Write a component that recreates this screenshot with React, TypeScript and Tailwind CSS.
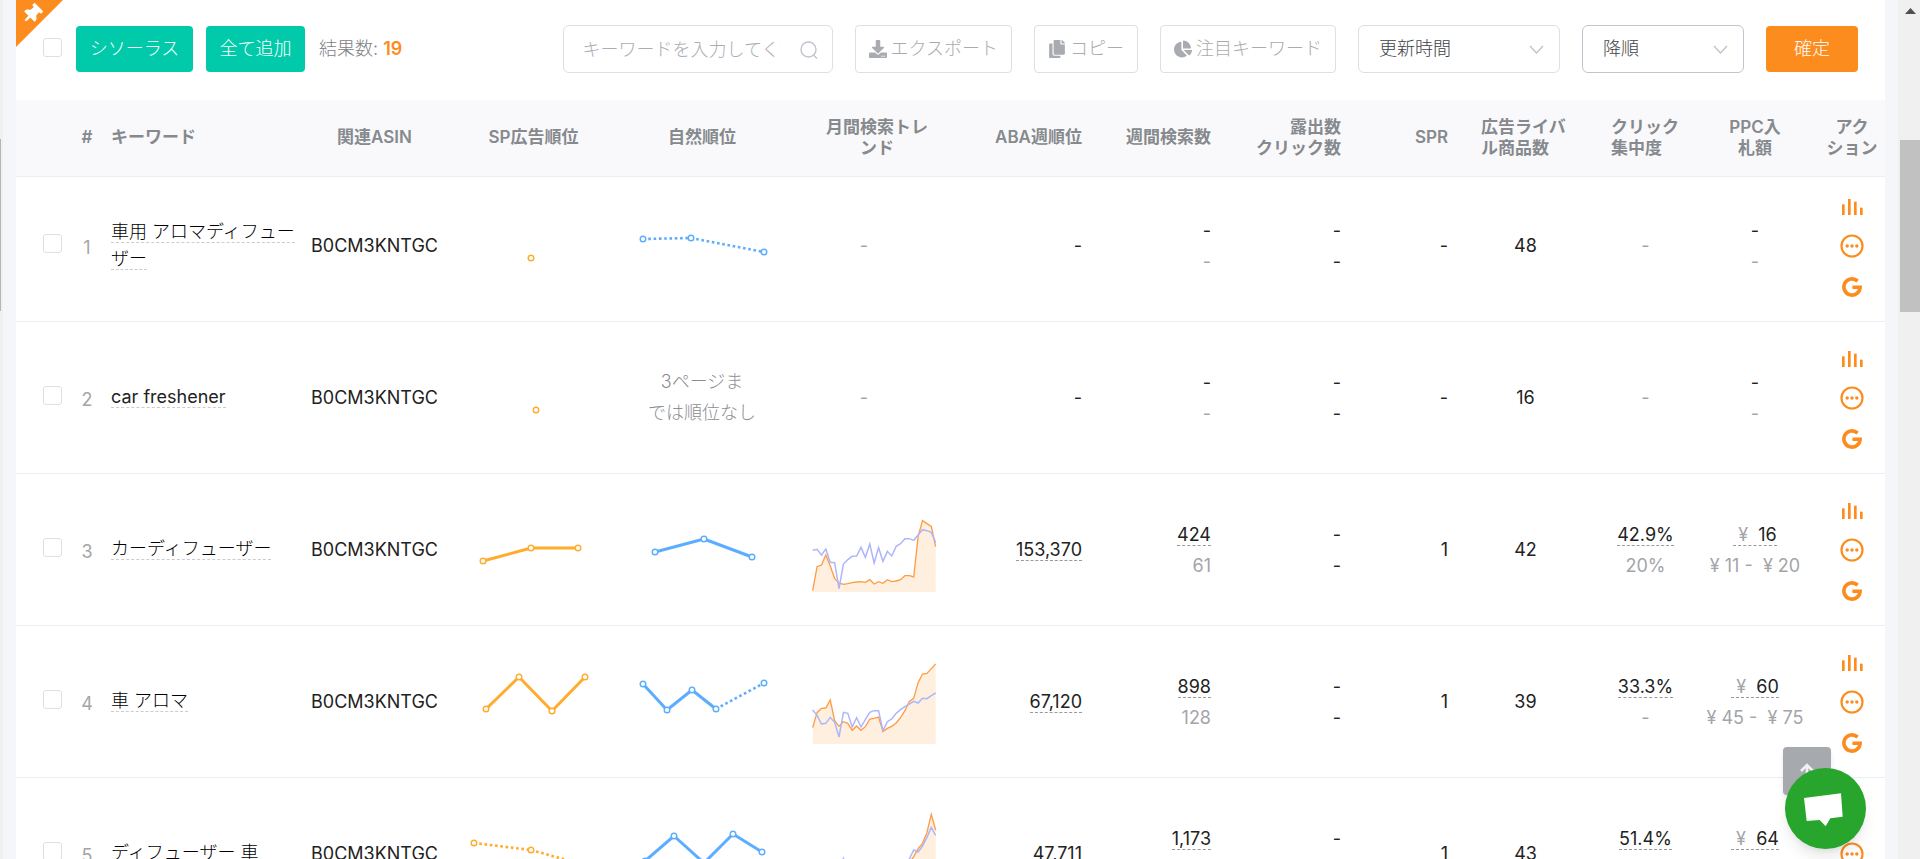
import React from "react";
import { FaChartPie, FaCopy, FaDownload, FaThumbtack } from "react-icons/fa";

type Point = [number, number];

interface RankLine {
  color: string;
  points: Point[];
  // index of the first dotted segment
  dottedFrom?: number;
}

interface Trend {
  searches: number[];
  rank: number[];
}

interface Row {
  id: number;
  keyword: string;
  asin: string;
  sp: RankLine;
  natural?: RankLine;
  trend?: Trend;
  aba?: string;
  weekly?: [string, string];
  exposure: [string, string];
  spr: string;
  rivals: string;
  click?: [string, string];
  ppc?: [string, string];
}

const AMBER = "#ffac2d";
const BLUE = "#5cadff";

const rows: Row[] = [
  {
    id: 1,
    keyword: "車用 アロマディフューザー",
    asin: "B0CM3KNTGC",
    sp: { color: AMBER, points: [[72, 62]] },
    natural: { color: BLUE, points: [[16, 43], [64, 42], [137, 56]], dottedFrom: 0 },
    exposure: ["-", "-"],
    spr: "-",
    rivals: "48",
  },
  {
    id: 2,
    keyword: "car freshener",
    asin: "B0CM3KNTGC",
    sp: { color: AMBER, points: [[77, 62]] },
    exposure: ["-", "-"],
    spr: "-",
    rivals: "16",
  },
  {
    id: 3,
    keyword: "カーディフューザー",
    asin: "B0CM3KNTGC",
    sp: { color: AMBER, points: [[24, 61], [72, 48], [119, 48]] },
    natural: { color: BLUE, points: [[28, 52], [77, 39], [125, 57]] },
    trend: {
      searches: [
        272, 200, 195, 165, 198, 235, 249, 253, 251, 248, 246, 245, 247, 239, 252,
        245, 250, 239, 245, 243, 239, 227, 227, 231, 110, 62, 71, 79, 140,
      ],
      rank: [
        151, 148, 165, 147, 187, 188, 266, 192, 179, 169, 168, 142, 172, 132, 189,
        143, 184, 154, 168, 139, 131, 116, 116, 121, 105, 89, 92, 97, 127,
      ],
    },
    aba: "153,370",
    weekly: ["424", "61"],
    exposure: ["-", "-"],
    spr: "1",
    rivals: "42",
    click: ["42.9%", "20%"],
    ppc: ["16", "¥ 11 -  ¥ 20"],
  },
  {
    id: 4,
    keyword: "車 アロマ",
    asin: "B0CM3KNTGC",
    sp: { color: AMBER, points: [[27, 57], [60, 25], [93, 59], [126, 25]] },
    natural: {
      color: BLUE,
      points: [[16, 32], [40, 58], [65, 38], [89, 57], [137, 31]],
      dottedFrom: 3,
    },
    trend: {
      searches: [
        227, 182, 169, 168, 144, 206, 223, 209, 214, 235, 222, 235, 224, 201, 199,
        195, 238, 229, 223, 213, 197, 176, 148, 139, 92, 66, 64, 50, 36,
      ],
      rank: [
        174, 190, 216, 214, 196, 211, 255, 181, 184, 225, 197, 225, 202, 181, 176,
        176, 236, 209, 201, 184, 173, 164, 156, 148, 153, 139, 140, 131, 123,
      ],
    },
    aba: "67,120",
    weekly: ["898", "128"],
    exposure: ["-", "-"],
    spr: "1",
    rivals: "39",
    click: ["33.3%", "-"],
    ppc: ["60", "¥ 45 -  ¥ 75"],
  },
  {
    id: 5,
    keyword: "ディフューザー 車",
    asin: "B0CM3KNTGC",
    sp: { color: AMBER, points: [[15, 39], [72, 46], [129, 62]], dottedFrom: 0 },
    natural: { color: BLUE, points: [[18, 57], [47, 32], [77, 59], [106, 30], [135, 48]] },
    trend: {
      searches: [
        230, 215, 210, 205, 200, 215, 220, 212, 215, 220, 222, 220, 215, 210, 212,
        215, 220, 215, 210, 205, 200, 190, 175, 158, 134, 118, 86, 31, 78,
      ],
      rank: [
        200, 210, 205, 200, 195, 200, 210, 163, 190, 200, 205, 200, 195, 190, 195,
        200, 205, 200, 195, 190, 185, 180, 165, 138, 144, 126, 100, 70, 94,
      ],
    },
    aba: "47,711",
    weekly: ["1,173", "\u00a0"],
    exposure: ["-", "-"],
    spr: "1",
    rivals: "43",
    click: ["51.4%", "\u00a0"],
    ppc: ["64", "\u00a0"],
  },
];

// Japanese keywords are set in the light weight, plain ASCII ones are not
const isAscii = (text: string) => /^[\x20-\x7e]+$/.test(text);

function RankChart({ line }: { line: RankLine }) {
  const { color, points, dottedFrom = points.length } = line;
  return (
    <svg width="150" height="100" viewBox="0 0 150 100" className="mx-auto block">
      {points.slice(1).map(([x, y], i) => (
        <line
          key={i}
          x1={points[i][0]}
          y1={points[i][1]}
          x2={x}
          y2={y}
          stroke={color}
          strokeWidth={i >= dottedFrom ? 2.6 : 3}
          strokeDasharray={i >= dottedFrom ? "2.6 2.7" : undefined}
        />
      ))}
      {points.map(([x, y], i) => (
        <circle key={i} cx={x} cy={y} r="2.8" fill="#fff" stroke={color} strokeWidth="1.4" />
      ))}
    </svg>
  );
}

function TrendChart({ trend }: { trend: Trend }) {
  const toPoints = (values: number[]) =>
    values.map((y, i) => `${(2 + i * 13.18).toFixed(1)},${y}`).join(" ");
  const searches = toPoints(trend.searches);
  return (
    <svg width="124" height="100" viewBox="0 0 372 300" className="ml-6 block">
      <polygon points={`2,276 ${searches} 371,276`} fill="#ff8c1f" fillOpacity="0.14" />
      <polyline points={searches} fill="none" stroke="#ff9b45" strokeWidth="4" />
      <polyline points={toPoints(trend.rank)} fill="none" stroke="#adb6fa" strokeWidth="4.5" />
    </svg>
  );
}

function BarsIcon() {
  return (
    <svg width="21" height="16" viewBox="0 0 63 48" fill="currentColor">
      <rect x="0" y="16" width="8" height="32" />
      <rect x="18" y="0" width="8" height="48" />
      <rect x="36" y="8" width="8" height="40" />
      <rect x="54" y="26" width="8" height="22" />
    </svg>
  );
}

function MoreIcon() {
  return (
    <svg width="24" height="24" viewBox="0 0 24 24" fill="currentColor">
      <circle cx="12" cy="12" r="10.5" fill="none" stroke="currentColor" strokeWidth="2.2" />
      <circle cx="7.2" cy="12" r="1.7" />
      <circle cx="12" cy="12" r="1.7" />
      <circle cx="16.8" cy="12" r="1.7" />
    </svg>
  );
}

function GoogleIcon() {
  return (
    <svg width="20" height="20" viewBox="0 0 20 20" fill="none" stroke="currentColor" strokeWidth="3.6">
      <path d="M15.6 4.1A8.1 8.1 0 1 0 18.1 10.2H10.4" />
    </svg>
  );
}

function Chevron() {
  return (
    <svg
      width="15"
      height="9"
      viewBox="0 0 15 9"
      className="pointer-events-none absolute right-4 top-5"
      fill="none"
      stroke="#c0c4cc"
      strokeWidth="1.4"
    >
      <path d="M1 1l6.5 7L14 1" />
    </svg>
  );
}

function Checkbox({ label }: { label: string }) {
  return (
    <input
      type="checkbox"
      aria-label={label}
      className="block size-[19px] shrink-0 appearance-none rounded-[3px] border border-[#dcdfe6] bg-white"
    />
  );
}

function ToolButton({ icon, children }: { icon: React.ReactNode; children: React.ReactNode }) {
  return (
    <button className="flex h-12 shrink-0 items-center gap-1 rounded border border-[#dcdfe6] px-[13px] text-[#a8abb0]">
      {icon}
      <span>{children}</span>
    </button>
  );
}

function Stacked({ values, muted = true }: { values: [string, string]; muted?: boolean }) {
  const dashed = /\d/.test(values[0]);
  return (
    <div className="leading-[31px]">
      <div>
        <span className={dashed ? "border-b border-dashed border-[#999]" : ""}>{values[0]}</span>
      </div>
      <div className={muted ? "text-[#a3a5a9]" : ""}>{values[1]}</div>
    </div>
  );
}

function KeywordRow({ row }: { row: Row }) {
  return (
    <tr className="h-[152px] border-b border-[#ebeef5] first:h-[145px] [&>td]:pt-px first:[&>td]:pb-[7px]">
      <td className="pl-[27px]">
        <div className="pb-1">
          <Checkbox label={row.keyword} />
        </div>
      </td>
      <td className="text-center text-[#a3a5a9]">
        <div className="pt-1">{row.id}</div>
      </td>
      <td className="pl-[13px] leading-[27px]">
        <div className="pb-0.5">
          <a
            href="#"
            className={`border-b border-dashed border-[#ccc] ${
              isAscii(row.keyword) ? "font-normal" : "font-light text-black"
            }`}
          >
            {row.keyword}
          </a>
        </div>
      </td>
      <td className="text-center">{row.asin}</td>
      <td>
        <RankChart line={row.sp} />
      </td>
      <td className="text-center">
        {row.natural ? (
          <RankChart line={row.natural} />
        ) : (
          <div className="pb-0.5 font-light leading-[31px] text-[#8c8e92]">
            3ページま
            <br />
            では順位なし
          </div>
        )}
      </td>
      <td>
        {row.trend ? (
          <TrendChart trend={row.trend} />
        ) : (
          <div className="pr-[26px] text-center text-[#a3a5a9]">-</div>
        )}
      </td>
      <td className="pr-[13px] text-right">
        {row.aba ? <span className="border-b border-dashed border-[#999]">{row.aba}</span> : "-"}
      </td>
      <td className="pr-[13px] text-right">
        <Stacked values={row.weekly ?? ["-", "-"]} />
      </td>
      <td className="pr-[13px] text-right">
        <Stacked values={row.exposure} muted={false} />
      </td>
      <td className="pr-[13px] text-right">{row.spr}</td>
      <td className="text-center">{row.rivals}</td>
      <td className="text-center">
        {row.click ? <Stacked values={row.click} /> : <span className="text-[#a3a5a9]">-</span>}
      </td>
      <td className="whitespace-pre text-center">
        {row.ppc ? (
          <div className="leading-[31px]">
            <div>
              <span className="border-b border-dashed border-[#999]">
                <span className="text-[#a3a5a9]"> ¥ </span> {row.ppc[0]}
              </span>
            </div>
            <div className="text-[#a3a5a9]">{row.ppc[1]}</div>
          </div>
        ) : (
          <Stacked values={["-", "-"]} />
        )}
      </td>
      <td className="pl-[10px]">
        <div className="flex flex-col items-center gap-[19px] pt-1 text-[#fd8c1e]">
          <button aria-label="グラフ">
            <BarsIcon />
          </button>
          <button aria-label="その他">
            <MoreIcon />
          </button>
          <a href="#" aria-label="Google">
            <GoogleIcon />
          </a>
        </div>
      </td>
    </tr>
  );
}

function Toolbar() {
  return (
    <div className="relative flex h-[100px] items-center px-[27px] pb-[2px] text-lg font-light">
      {/* Pinned corner */}
      <svg width="47" height="47" viewBox="0 0 47 47" className="absolute left-0 top-0">
        <path d="M0 0h47L0 47z" fill="#fd8c1e" />
      </svg>
      <FaThumbtack className="absolute left-1.5 top-1 size-5 rotate-45 text-white" />

      <div className="pb-[3px]">
        <Checkbox label="全て選択" />
      </div>
      <button className="ml-3.5 h-[46px] w-[117px] shrink-0 rounded bg-[#00caaa] text-white">シソーラス</button>
      <button className="ml-[13px] h-[46px] w-[99px] shrink-0 rounded bg-[#00caaa] text-white">全て追加</button>
      <div className="ml-3.5 whitespace-nowrap text-[#7e8084]">
        結果数: <b className="font-semibold text-[#fd8c1e]">19</b>
      </div>

      <div className="ml-auto flex items-center gap-[22px]">
        <div className="relative w-[270px]">
          <input
            type="text"
            aria-label="キーワード"
            placeholder="キーワードを入力してください"
            className="h-12 w-full rounded-md border border-[#dcdfe6] pl-[19px] pr-[51px] placeholder:text-[#a9adb6]"
          />
          <svg
            width="18"
            height="18"
            viewBox="0 0 18 18"
            className="absolute right-[15px] top-4"
            fill="none"
            stroke="#c0c4cc"
            strokeWidth="1.4"
          >
            <circle cx="8.5" cy="8.5" r="7.5" />
            <path d="M13 13.5l4 4" />
          </svg>
        </div>
        <ToolButton icon={<FaDownload className="size-[18px]" />}>エクスポート</ToolButton>
        <ToolButton icon={<FaCopy className="size-[18px]" />}>コピー</ToolButton>
        <ToolButton icon={<FaChartPie className="size-[18px]" />}>注目キーワード</ToolButton>
        <div className="relative">
          <select
            aria-label="並び替え"
            className="h-12 w-[202px] appearance-none rounded-md border border-[#dcdfe6] bg-white pl-5 text-[#404246]"
          >
            <option>更新時間</option>
          </select>
          <Chevron />
        </div>
        <div className="relative">
          <select
            aria-label="順序"
            className="h-12 w-[162px] appearance-none rounded-md border border-[#c0c4cc] bg-white pl-5 text-[#404246]"
          >
            <option>降順</option>
          </select>
          <Chevron />
        </div>
        <button className="h-[46px] w-[92px] rounded bg-[#fd8c1e] text-white">確定</button>
      </div>
    </div>
  );
}

function KeywordTable() {
  return (
    <table className="w-full min-w-[1800px] table-fixed border-collapse text-lg text-[#222]">
      <colgroup>
        <col className="w-[60px]" />
        <col className="w-[22px]" />
        <col />
        <col className="w-[153px]" />
        <col className="w-[165px]" />
        <col className="w-[172px]" />
        <col className="w-[178px]" />
        <col className="w-[129px]" />
        <col className="w-[129px]" />
        <col className="w-[130px]" />
        <col className="w-[107px]" />
        <col className="w-[129px]" />
        <col className="w-[111px]" />
        <col className="w-[108px]" />
        <col className="w-[76px]" />
      </colgroup>
      <thead>
        <tr className="h-[76px] border-b border-[#ebeef5] bg-[#f9f9fb] text-[17px] leading-[21px] text-[#86898d] [&>th]:font-semibold">
          <th aria-label="選択" />
          <th>#</th>
          <th className="pl-[13px] text-left">キーワード</th>
          <th>関連ASIN</th>
          <th>SP広告順位</th>
          <th>自然順位</th>
          <th>
            月間検索トレ
            <br />
            ンド
          </th>
          <th className="pr-[13px] text-right">ABA週順位</th>
          <th className="pr-[13px] text-right">週間検索数</th>
          <th className="pr-[13px] text-right">
            露出数
            <br />
            クリック数
          </th>
          <th className="pr-[13px] text-right">SPR</th>
          <th className="pl-5 text-left">
            広告ライバ
            <br />
            ル商品数
          </th>
          <th className="pl-[21px] text-left">
            クリック
            <br />
            集中度
          </th>
          <th>
            PPC入
            <br />
            札額
          </th>
          <th className="pl-[10px]">
            アク
            <br />
            ション
          </th>
        </tr>
      </thead>
      <tbody>
        {rows.map((row) => (
          <KeywordRow key={row.id} row={row} />
        ))}
      </tbody>
    </table>
  );
}

export default function App() {
  return (
    <div className="relative flex h-screen overflow-hidden bg-[#f5f6f9] font-[Inter,'Noto_Sans_CJK_JP',sans-serif]">
      <div className="w-[3px] shrink-0 bg-[#f0f0f0] pt-[139px]">
        <div className="h-[172px] w-px bg-[#b5b5b5]" />
      </div>

      <main className="mx-[13px] min-w-0 flex-1 bg-white">
        <Toolbar />
        <KeywordTable />
      </main>

      {/* Scrollbar */}
      <div className="w-[22px] shrink-0 bg-[#f0f0f0] pl-[2px]">
        <svg width="20" height="22" viewBox="0 0 20 22" className="block">
          <path d="M5 14l5.5-6 5.5 6z" fill="#505050" />
        </svg>
        <div className="mt-[118px] h-[172px] bg-[#c1c1c1]" />
      </div>

      {/* Floating buttons */}
      <button
        aria-label="トップへ戻る"
        className="absolute bottom-16 right-[89px] flex size-12 items-start justify-center rounded bg-[#a6a9ad] pt-[15px] shadow-md"
      >
        <svg width="16" height="18" viewBox="0 0 16 18" fill="none" stroke="#f0f0f0" strokeWidth="2.6">
          <path d="M8 17V3M2 9l6-6 6 6" />
        </svg>
      </button>
      <button
        aria-label="チャット"
        className="absolute bottom-2.5 right-[54px] size-[81px] rounded-full bg-[#28a52c] shadow-lg"
      >
        <svg viewBox="0 0 243 243" className="size-full">
          <path d="M57 90L168 76L173 146L136 151L122 175L104 156L65 159z" fill="#fff" />
        </svg>
      </button>
    </div>
  );
}
